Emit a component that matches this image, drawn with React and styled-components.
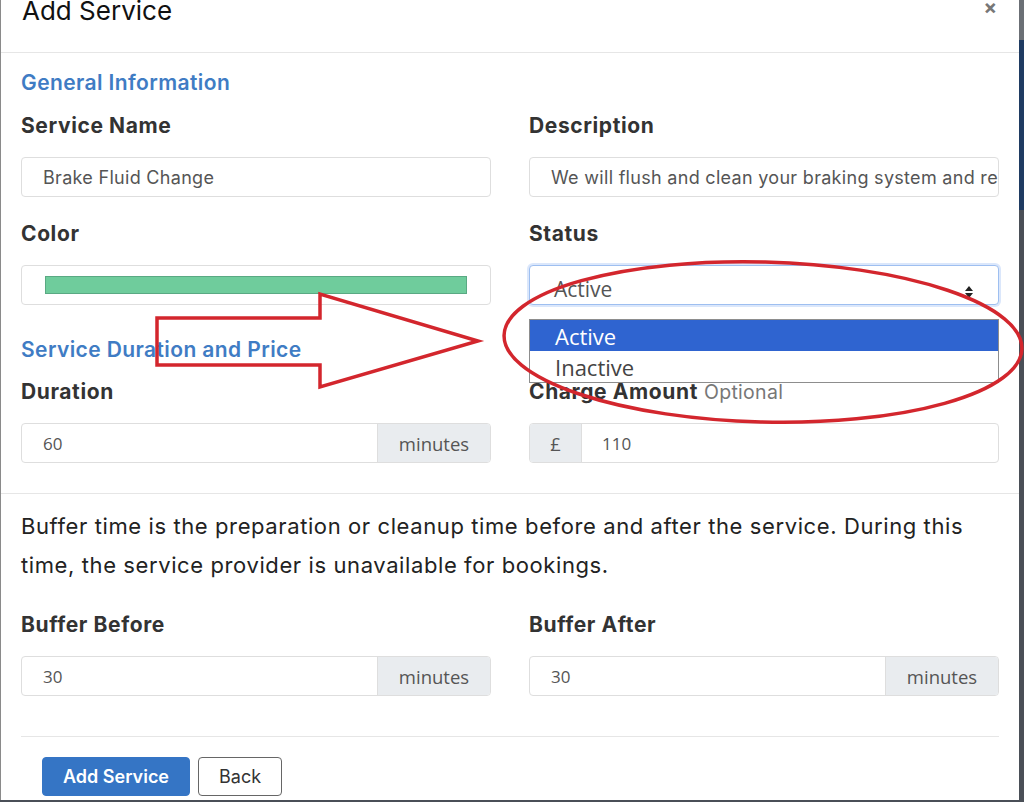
import React from "react";
import styled, { createGlobalStyle } from "styled-components";

const GlobalStyle = createGlobalStyle`
  html, body {
    margin: 0;
    padding: 0;
    background: #5d6470;
    font-family: "Inter", "Noto Sans", sans-serif;
  }
  * {
    box-sizing: border-box;
  }
`;

const Page = styled.div`
  position: relative;
  width: 1024px;
  height: 802px;
  overflow: hidden;
  background: linear-gradient(
    to bottom,
    #6b6f75 0px,
    #6b6f75 40px,
    #1f3b62 40px,
    #1f3b62 210px,
    #4a4f57 210px,
    #4a4f57 802px
  );
`;

const Modal = styled.div`
  width: 1019px;
  height: 800px;
  background: #fff;
  border-left: 1px solid #8a8a8a;
  display: flex;
  flex-direction: column;
`;

const Header = styled.div`
  height: 53px;
  flex-shrink: 0;
  display: flex;
  justify-content: space-between;
  align-items: flex-start;
  padding: 0 22px 0 21px;
  border-bottom: 1px solid #e6e6e6;
`;

const ModalTitle = styled.h2`
  margin: -5px 0 0;
  font-size: 26px;
  line-height: 32px;
  font-weight: 400;
  color: #111;
`;

const Close = styled.span`
  margin-top: -3px;
  font-size: 20px;
  line-height: 20px;
  font-weight: 700;
  color: #777;
`;

const Section = styled.div`
  padding: 16px 20px 30px 20px;
  border-bottom: 1px solid #e6e6e6;
`;

const SectionTitle = styled.h3`
  margin: ${(p) => (p.$first ? "0 0 17px" : "31px 0 16px")};
  font-size: 21px;
  line-height: 28px;
  font-weight: 600;
  letter-spacing: 0.4px;
  color: #3f7cc4;
`;

const Grid = styled.div`
  display: grid;
  grid-template-columns: 470px 470px;
  column-gap: 38px;
  row-gap: 25px;
`;

const Field = styled.div`
  display: flex;
  flex-direction: column;
`;

const Label = styled.label`
  font-size: 21px;
  line-height: 24px;
  font-weight: 700;
  letter-spacing: 0.6px;
  color: #333;
  margin-bottom: 19px;
  white-space: nowrap;
`;

const Optional = styled.span`
  font-weight: 400;
  color: #777;
  font-size: 19.5px;
  letter-spacing: 0.3px;
  margin-left: 6px;
`;

const InputBox = styled.div`
  position: relative;
  height: 40px;
  display: flex;
  align-items: stretch;
  border: 1px solid ${(p) => (p.$focus ? "#9ebff0" : "#dedede")};
  box-shadow: ${(p) => (p.$focus ? "0 0 0 2px #dbe7fb" : "none")};
  border-radius: 4px;
  background: #fff;
`;

const Value = styled.div`
  flex: 1;
  display: flex;
  align-items: center;
  padding-left: ${(p) => p.$pl || "21px"};
  padding-top: ${(p) => p.$pt || "0"};
  font-family: ${(p) =>
    p.$num ? '"Open Sans", "Noto Sans", sans-serif' : '"Inter", sans-serif'};
  font-size: ${(p) => p.$size || (p.$num ? "17px" : "18px")};
  letter-spacing: ${(p) => (p.$num ? "0" : "0.3px")};
  color: #555;
  white-space: nowrap;
  overflow: hidden;
`;

const Addon = styled.div`
  width: ${(p) => p.$w};
  display: flex;
  align-items: center;
  justify-content: center;
  background: #e9ecef;
  color: #555;
  font-family: "Open Sans", "Noto Sans", sans-serif;
  font-size: 18.5px;
  border-left: ${(p) => (p.$left ? "none" : "1px solid #dedede")};
  border-right: ${(p) => (p.$left ? "1px solid #dedede" : "none")};
  border-radius: ${(p) => (p.$left ? "3px 0 0 3px" : "0 3px 3px 0")};
`;

const Swatch = styled.div`
  flex: 1;
  margin: 10px 23px;
  background: #6fcc9c;
  border: 1px solid #5aa983;
`;

const Arrows = styled.svg`
  position: absolute;
  right: 24px;
  top: 19px;
`;

const Dropdown = styled.ul`
  position: absolute;
  left: -1px;
  right: -1px;
  top: 53px;
  margin: 0;
  padding: 0;
  list-style: none;
  background: #fff;
  border: 1px solid #8d8d8d;
  z-index: 2;
`;

const Option = styled.li`
  height: 31px;
  display: flex;
  align-items: center;
  padding-left: 25px;
  font-family: "Open Sans", "Noto Sans", sans-serif;
  font-size: 22px;
  color: ${(p) => (p.$selected ? "#fff" : "#444")};
  background: ${(p) => (p.$selected ? "#2f64d0" : "#fff")};
`;

const Paragraph = styled.p`
  margin: 0 0 28px;
  font-size: 22px;
  line-height: 39px;
  letter-spacing: 0.6px;
  color: #222;
`;

const Lower = styled.div`
  padding: 13px 20px 0 20px;
`;

const LowerGrid = styled(Grid)`
  padding-bottom: 40px;
  border-bottom: 1px solid #e6e6e6;
`;

const Footer = styled.div`
  display: flex;
  gap: 8px;
  padding: 20px 0 0 21px;
`;

const Button = styled.button`
  height: 39px;
  padding: 0 20px;
  border-radius: 4px;
  font-family: "Inter", sans-serif;
  font-size: 18px;
  font-weight: ${(p) => (p.$primary ? 600 : 400)};
  color: ${(p) => (p.$primary ? "#fff" : "#333")};
  background: ${(p) => (p.$primary ? "#3575c5" : "#fff")};
  border: 1px solid ${(p) => (p.$primary ? "#3575c5" : "#666")};
`;

const Overlay = styled.svg`
  position: absolute;
  left: 0;
  top: 0;
  pointer-events: none;
  z-index: 5;
`;

const TextInput = ({ value }) => (
  <InputBox>
    <Value>{value}</Value>
  </InputBox>
);

const MinutesInput = ({ value }) => (
  <InputBox>
    <Value $num>{value}</Value>
    <Addon $w="113px">minutes</Addon>
  </InputBox>
);

const statusOptions = ["Active", "Inactive"];

export default function App() {
  return (
    <>
      <GlobalStyle />
      <Page>
        <Modal>
          <Header>
            <ModalTitle>Add Service</ModalTitle>
            <Close>×</Close>
          </Header>

          <Section>
            <SectionTitle $first>General Information</SectionTitle>
            <Grid>
              <Field>
                <Label>Service Name</Label>
                <TextInput value="Brake Fluid Change" />
              </Field>
              <Field>
                <Label>Description</Label>
                <TextInput value="We will flush and clean your braking system and replace the fluid" />
              </Field>
              <Field>
                <Label>Color</Label>
                <InputBox>
                  <Swatch />
                </InputBox>
              </Field>
              <Field>
                <Label>Status</Label>
                <InputBox $focus>
                  <Value $pl="24px" $pt="8px" $num $size="21px">
                    Active
                  </Value>
                  <Arrows width="10" height="14" viewBox="0 0 10 14">
                    <path d="M5 1 L9 6 H1 Z M5 13 L9 8 H1 Z" fill="#222" />
                  </Arrows>
                  <Dropdown>
                    {statusOptions.map((opt, i) => (
                      <Option key={opt} $selected={i === 0}>
                        {opt}
                      </Option>
                    ))}
                  </Dropdown>
                </InputBox>
              </Field>
            </Grid>

            <SectionTitle>Service Duration and Price</SectionTitle>
            <Grid>
              <Field>
                <Label>Duration</Label>
                <MinutesInput value="60" />
              </Field>
              <Field>
                <Label>
                  Charge Amount<Optional>Optional</Optional>
                </Label>
                <InputBox>
                  <Addon $w="52px" $left>
                    £
                  </Addon>
                  <Value $num $pl="20px">
                    110
                  </Value>
                </InputBox>
              </Field>
            </Grid>
          </Section>

          <Lower>
            <Paragraph>
              Buffer time is the preparation or cleanup time before and after
              the service. During this time, the service provider is
              unavailable for bookings.
            </Paragraph>
            <LowerGrid>
              <Field>
                <Label>Buffer Before</Label>
                <MinutesInput value="30" />
              </Field>
              <Field>
                <Label>Buffer After</Label>
                <MinutesInput value="30" />
              </Field>
            </LowerGrid>
            <Footer>
              <Button $primary>Add Service</Button>
              <Button>Back</Button>
            </Footer>
          </Lower>
        </Modal>

        <Overlay width="1024" height="802" viewBox="0 0 1024 802">
          <polygon
            points="157,318 320,318 320,294 478,341 320,387 320,365 157,365"
            fill="none"
            stroke="#d3262d"
            strokeWidth="3.5"
            strokeLinejoin="miter"
          />
          <ellipse
            cx="763"
            cy="342"
            rx="259"
            ry="80"
            fill="none"
            stroke="#d3262d"
            strokeWidth="3.5"
            transform="rotate(1.5 763 342)"
          />
        </Overlay>
      </Page>
    </>
  );
}
